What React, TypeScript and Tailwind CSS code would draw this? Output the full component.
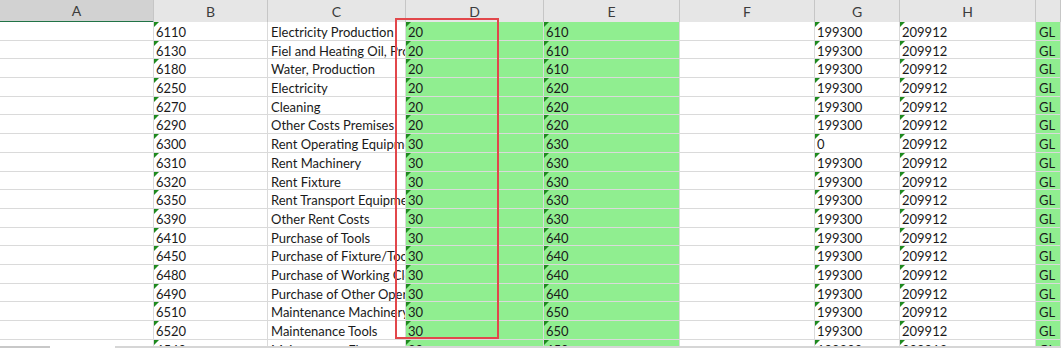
import React from "react";

type Row = {
  acct: string;
  name: string;
  grp: string;
  sub: string;
  from: string;
  to: string;
  kind: string;
};

const rows: Row[] = [
  { acct: "6110", name: "Electricity Production", grp: "20", sub: "610", from: "199300", to: "209912", kind: "GL" },
  { acct: "6130", name: "Fiel and Heating Oil, Production", grp: "20", sub: "610", from: "199300", to: "209912", kind: "GL" },
  { acct: "6180", name: "Water, Production", grp: "20", sub: "610", from: "199300", to: "209912", kind: "GL" },
  { acct: "6250", name: "Electricity", grp: "20", sub: "620", from: "199300", to: "209912", kind: "GL" },
  { acct: "6270", name: "Cleaning", grp: "20", sub: "620", from: "199300", to: "209912", kind: "GL" },
  { acct: "6290", name: "Other Costs Premises", grp: "20", sub: "620", from: "199300", to: "209912", kind: "GL" },
  { acct: "6300", name: "Rent Operating Equipment", grp: "30", sub: "630", from: "0", to: "209912", kind: "GL" },
  { acct: "6310", name: "Rent Machinery", grp: "30", sub: "630", from: "199300", to: "209912", kind: "GL" },
  { acct: "6320", name: "Rent Fixture", grp: "30", sub: "630", from: "199300", to: "209912", kind: "GL" },
  { acct: "6350", name: "Rent Transport Equipment", grp: "30", sub: "630", from: "199300", to: "209912", kind: "GL" },
  { acct: "6390", name: "Other Rent Costs", grp: "30", sub: "630", from: "199300", to: "209912", kind: "GL" },
  { acct: "6410", name: "Purchase of Tools", grp: "30", sub: "640", from: "199300", to: "209912", kind: "GL" },
  { acct: "6450", name: "Purchase of Fixture/Tools", grp: "30", sub: "640", from: "199300", to: "209912", kind: "GL" },
  { acct: "6480", name: "Purchase of Working Clothes", grp: "30", sub: "640", from: "199300", to: "209912", kind: "GL" },
  { acct: "6490", name: "Purchase of Other Operating", grp: "30", sub: "640", from: "199300", to: "209912", kind: "GL" },
  { acct: "6510", name: "Maintenance Machinery", grp: "30", sub: "650", from: "199300", to: "209912", kind: "GL" },
  { acct: "6520", name: "Maintenance Tools", grp: "30", sub: "650", from: "199300", to: "209912", kind: "GL" },
  { acct: "6540", name: "Maintenance Floor", grp: "30", sub: "650", from: "199300", to: "209912", kind: "GL" },
];

const cols = ["A", "B", "C", "D", "E", "F", "G", "H", ""];

const gridCols =
  "grid grid-cols-[154px_114px_138px_138px_136px_135px_85px_136px_1fr]";

// cell holding a number stored as text: green flag in the top-left corner
function TextNum({ value, green }: { value: string; green?: boolean }) {
  return (
    <div
      className={`relative h-full overflow-hidden whitespace-nowrap border-r border-b border-[#dadada] pl-[2px] leading-[20px] ${
        green ? "bg-[#90ee90]" : "bg-white"
      }`}
    >
      <span className="absolute left-0 top-0 h-0 w-0 border-t-[5px] border-r-[5px] border-t-[#1e8a1e] border-r-transparent" />
      {value}
    </div>
  );
}

function Cell({
  children,
  green,
}: {
  children?: React.ReactNode;
  green?: boolean;
}) {
  return (
    <div
      className={`h-full overflow-hidden whitespace-nowrap border-r border-b border-[#dadada] pl-[3px] leading-[20px] ${
        green ? "bg-[#90ee90]" : "bg-white"
      }`}
    >
      {children}
    </div>
  );
}

export default function App() {
  return (
    <div className="relative h-[351px] w-[1061px] overflow-hidden bg-white font-['Lato',sans-serif] text-[13px] text-[#1a1a1a]">
      {/* column headers */}
      <div className={`${gridCols} h-[22px] bg-[#e6e6e6] text-[14px] text-[#3c3c3c]`}>
        {cols.map((c, i) => (
          <div
            key={i}
            className={`flex items-center justify-center border-r border-[#c6c6c6] ${
              i === 0
                ? "border-b-2 border-b-[#217346] bg-[#d2d2d2]"
                : "border-b border-b-[#c6c6c6]"
            }`}
          >
            {c}
          </div>
        ))}
      </div>

      {/* sheet body */}
      {rows.map((r, i) => (
        <div key={i} className={`${gridCols} h-[18.7px]`}>
          <Cell />
          <TextNum value={r.acct} />
          <Cell>{r.name}</Cell>
          <TextNum value={r.grp} green />
          <TextNum value={r.sub} green />
          <Cell />
          <TextNum value={r.from} />
          <TextNum value={r.to} />
          <Cell green>{r.kind}</Cell>
        </div>
      ))}

      {/* selection outline around column D */}
      <div className="pointer-events-none absolute left-[395px] top-[18px] h-[321px] w-[104px] border-2 border-[#e2474b]" />

      {/* horizontal scrollbar edge */}
      <div className="absolute bottom-0 left-0 flex h-[5px] w-full bg-white">
        <div className="h-[2px] w-[50px] bg-[#c8c8c8]" />
        <div className="h-[2px] w-[65px] bg-transparent" />
        <div className="h-[2px] flex-1 bg-[#d6d6d6]" />
      </div>
    </div>
  );
}
